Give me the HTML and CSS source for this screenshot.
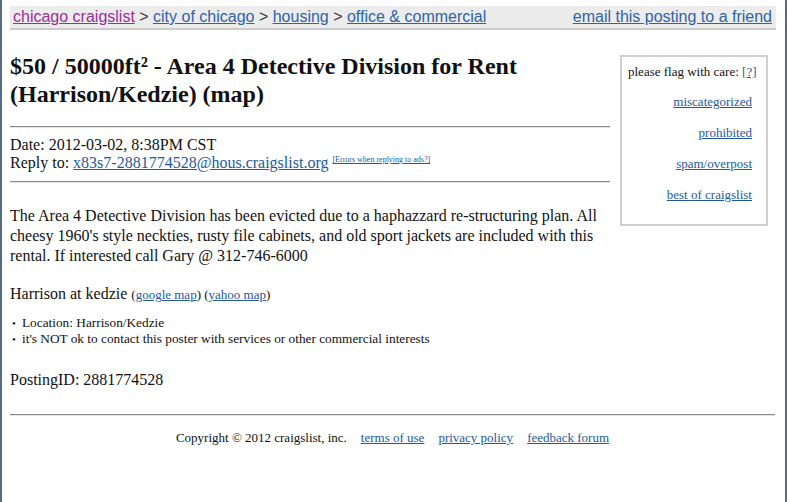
FILE: index.html
```html
<!DOCTYPE html>
<html>
<head>
<meta charset="utf-8">
<link rel="stylesheet" href="styles.css">
</head>
<body>
<div class="frame">
  <div class="bar">
    <div class="crumbs">
      <a class="visited" href="#">chicago craigslist</a> &gt; <a href="#">city of chicago</a> &gt; <a href="#">housing</a> &gt; <a href="#">office &amp; commercial</a>
    </div>
    <a href="#">email this posting to a friend</a>
  </div>

  <div class="row">
    <div class="main">
      <h2 class="title">$50 / 50000ft² - Area 4 Detective Division for Rent (Harrison/Kedzie) (map)</h2>
      <hr class="rule">
      <div class="meta">
        <div>Date: 2012-03-02, 8:38PM CST</div>
        <div>Reply to: <a href="#">x83s7-2881774528@hous.craigslist.org</a> <sup class="errs"><a href="#">[Errors when replying to ads?]</a></sup></div>
      </div>
      <hr class="rule rule2">
      <p class="body">The Area 4 Detective Division has been evicted due to a haphazzard re-structuring plan. All cheesy 1960's style neckties, rusty file cabinets, and old sport jackets are included with this rental. If interested call Gary @ 312-746-6000</p>
      <p class="loc">Harrison at kedzie <small>(<a href="#">google map</a>) (<a href="#">yahoo map</a>)</small></p>
      <ul class="facts">
        <li>Location: Harrison/Kedzie</li>
        <li>it's NOT ok to contact this poster with services or other commercial interests</li>
      </ul>
      <p class="pid">PostingID: 2881774528</p>
    </div>
    <div class="flags">
      <div class="flaghead">please flag with care: <a href="#">[?]</a></div>
      <a class="flag" href="#">miscategorized</a>
      <a class="flag" href="#">prohibited</a>
      <a class="flag" href="#">spam/overpost</a>
      <a class="flag" href="#">best of craigslist</a>
    </div>
  </div>

  <hr class="rule rule3">
  <div class="footer">
    Copyright © 2012 craigslist, inc.<a href="#">terms of use</a><a href="#">privacy policy</a><a href="#">feedback forum</a>
  </div>
</div>
</body>
</html>
```
FILE: styles.css
```css
html, body {
  margin: 0;
  padding: 0;
  background: #ffffff;
}
body {
  font-family: "Liberation Serif", "Times New Roman", serif;
  color: #111;
}
a {
  color: #23599a;
  text-decoration: underline;
}
.frame {
  box-sizing: border-box;
  width: 787px;
  height: 502px;
  border-left: 2px solid #566b84;
  border-right: 2px solid #566b84;
  padding: 6px 0 0 8px;
  overflow: hidden;
}
.bar {
  width: 766px;
  box-sizing: border-box;
  height: 24px;
  background: #ececec;
  border-bottom: 2px solid #cbcbcb;
  display: flex;
  justify-content: space-between;
  align-items: center;
  padding: 0 4px 0 3px;
  font-family: "Liberation Sans", Arial, sans-serif;
  font-size: 16px;
  color: #333;
}
.bar a {
  color: #2d64a8;
}
.bar a.visited {
  color: #9b2c9b;
}
.row {
  display: flex;
  align-items: flex-start;
}
.main {
  width: 600px;
  padding-top: 22px;
}
.title {
  margin: 0;
  font-size: 24px;
  line-height: 28px;
  font-weight: bold;
  color: #111;
}
.rule {
  border: 0;
  border-top: 1px solid #8a8a8a;
  border-bottom: 1px solid #e4e4e4;
  margin: 18px 0 0 0;
  height: 0;
}
.meta {
  margin-top: 8px;
  font-size: 16px;
  line-height: 18px;
}
.errs {
  font-size: 8px;
  vertical-align: 6px;
  line-height: 0;
}
.rule2 {
  margin-top: 9px;
}
.body {
  margin: 23px 0 0 0;
  font-size: 16px;
  line-height: 20px;
}
.loc {
  margin: 18px 0 0 0;
  font-size: 16px;
  line-height: 20px;
}
.loc small {
  font-size: 13px;
}
.facts {
  margin: 10px 0 0 0;
  padding-left: 8px;
  list-style: none;
  font-size: 13.3px;
  line-height: 16px;
}
.facts li::before {
  content: "•";
  display: inline-block;
  width: 10px;
  margin-left: -6px;
  font-size: 11px;
}
.pid {
  margin: 23px 0 0 0;
  font-size: 16px;
  line-height: 20px;
}
.flags {
  margin: 25px 0 0 10px;
  width: 148px;
  box-sizing: border-box;
  border: 2px solid #cfcfcf;
  padding: 7px 6px 21px 6px;
  display: flex;
  flex-direction: column;
  align-items: flex-end;
  font-size: 13px;
  line-height: 16px;
}
.flaghead {
  align-self: flex-start;
  white-space: nowrap;
}
.flag {
  margin: 14px 8px 0 0;
}
.flag + .flag {
  margin-top: 15px;
}
.rule3 {
  width: 765px;
  margin: 24px 0 0 0;
}
.footer {
  width: 765px;
  margin-top: 14px;
  text-align: center;
  font-size: 13px;
  line-height: 16px;
}
.footer a {
  margin-left: 14px;
}
```
